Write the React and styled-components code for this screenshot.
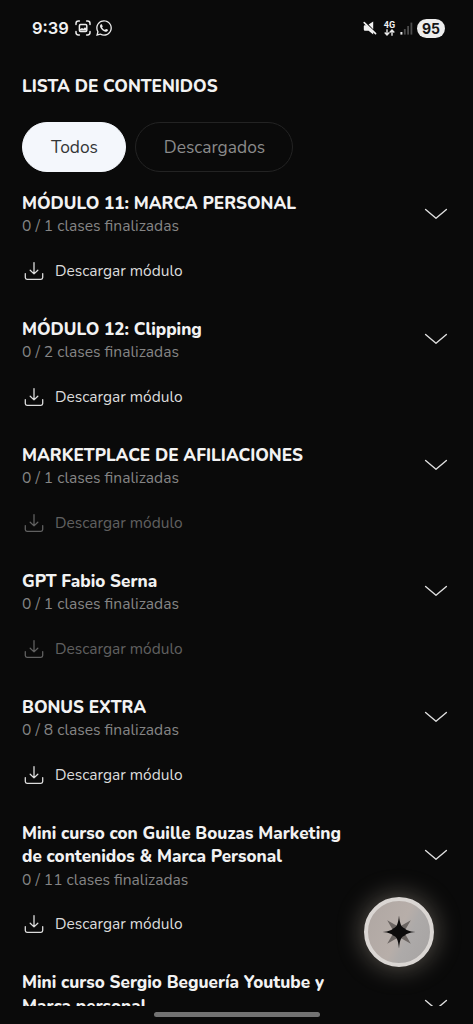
import { FaWhatsapp } from 'react-icons/fa'
import styled, { createGlobalStyle } from 'styled-components'

const modules = [
  { title: ['MÓDULO 11: MARCA PERSONAL'], classes: 1 },
  { title: ['MÓDULO 12: Clipping'], classes: 2 },
  { title: ['MARKETPLACE DE AFILIACIONES'], classes: 1, disabled: true },
  { title: ['GPT Fabio Serna'], classes: 1, disabled: true },
  { title: ['BONUS EXTRA'], classes: 8 },
  { title: ['Mini curso con Guille Bouzas Marketing', 'de contenidos & Marca Personal'], classes: 11 },
  { title: ['Mini curso Sergio Beguería Youtube y', 'Marca personal'] }
]

const CaptureIcon = () => (
  <svg width='16' height='16' viewBox='0 0 16 16' fill='none' stroke='#ececec' strokeWidth='1.5' strokeLinecap='round'>
    <path d='M1 4.6V3.4Q1 1 3.4 1h1M11.6 1h1Q15 1 15 3.4v1.2M15 11.4v1.2q0 2.4-2.4 2.4h-1M4.4 15h-1Q1 15 1 12.6v-1.2' />
    <rect x='4.4' y='4.6' width='7.4' height='6.8' rx='1.2' />
    <path d='M5 10.6V9l2-1 1.4.8 1.6-1.6 1.4 1.2v2.2z' fill='#ececec' stroke='none' />
  </svg>
)

const MutedIcon = () => (
  <svg width='14' height='14' viewBox='0 0 14 14' fill='#f2f2f2'>
    <path d='M1.4 4.2h2.2l6.6 6.6v2.6L5.6 9.8H2q-1.2 0-1.2-1.2V5zM5.6 3.6L10.2.6v7.6z' />
    <path d='M1.2 1.6l11.4 11' stroke='#f2f2f2' strokeWidth='1.6' strokeLinecap='round' />
  </svg>
)

const ArrowsIcon = () => (
  <svg width='11' height='7' viewBox='0 0 11 7' fill='none' stroke='#e8e8e8' strokeWidth='1.4'>
    <path d='M3 .2v5.6M.7 3.6L3 6l2.3-2.4M8 6.8V1.2M5.7 3.4L8 1l2.3 2.4' />
  </svg>
)

const SignalIcon = () => (
  <svg width='13' height='13' viewBox='0 0 13 13'>
    <rect x='0.4' y='10' width='2' height='2.6' fill='#e8e8e8' />
    <rect x='3.9' y='7' width='1.8' height='5.6' fill='#4c4c4c' />
    <rect x='7.2' y='4' width='1.8' height='8.6' fill='#4c4c4c' />
    <rect x='10.5' y='0.6' width='1.8' height='12' fill='#4c4c4c' />
  </svg>
)

const DownloadIcon = () => (
  <svg width='20' height='20' viewBox='0 0 20 20' fill='none' stroke='currentColor' strokeWidth='1.3' strokeLinecap='round' strokeLinejoin='round'>
    <path d='M10 1.6v11.2M6.2 9.2l3.8 3.7 3.8-3.7M1.3 12.6v4q0 1.7 1.7 1.7h14q1.7 0 1.7-1.7v-4' />
  </svg>
)

const ChevronIcon = () => (
  <svg width='24' height='12' viewBox='0 0 24 12' fill='none' stroke='#dedede' strokeWidth='1.4' strokeLinecap='round' strokeLinejoin='round'>
    <path d='M1.6 1.5L12 10.3l10.4-8.8' />
  </svg>
)

const StarIcon = () => (
  <svg width='34' height='34' viewBox='-17 -17 34 34'>
    <path d='M-11.8-11.8L0-5 11.8-11.8 5 0 11.8 11.8 0 5-11.8 11.8-5 0z' fill='#6b6562' />
    <path d='M0-16.4C.9-7 2.6-4.8 5.4-3.8 7-2.2 10-.6 16.4 0 10 .6 7 2.2 5.4 3.8 2.6 4.8.9 7 0 16.4-.9 7-2.6 4.8-5.4 3.8-7 2.2-10 .6-16.4 0-10-.6-7-2.2-5.4-3.8-2.6-4.8-.9-7 0-16.4z' fill='#0c0b0b' />
  </svg>
)

export default function App () {
  return (
    <Screen>
      <GlobalStyle />
      <StatusBar>
        <StatusGroup>
          <Time>9:39</Time>
          <CaptureIcon />
          <FaWhatsapp size={18} color='#ececec' />
        </StatusGroup>
        <StatusRight>
          <MutedIcon />
          <Network>
            <span>4G</span>
            <ArrowsIcon />
          </Network>
          <SignalIcon />
          <Battery>95</Battery>
        </StatusRight>
      </StatusBar>
      <Content>
        <Heading>LISTA DE CONTENIDOS</Heading>
        <Tabs>
          <Tab $active $width={104}>Todos</Tab>
          <Tab $width={158}>Descargados</Tab>
        </Tabs>
        {modules.map(({ title, classes, disabled }) => (
          <Module key={title[0]}>
            <ModuleHeader>
              <div>
                {title.map(line => <ModuleTitle key={line}>{line}</ModuleTitle>)}
                <Progress>{classes && `0 / ${classes} clases finalizadas`}</Progress>
              </div>
              <ChevronIcon />
            </ModuleHeader>
            {classes &&
              <Download disabled={disabled}>
                <DownloadIcon />
                Descargar módulo
              </Download>}
          </Module>
        ))}
      </Content>
      <HomeArea>
        <HomeBar />
      </HomeArea>
      <FloatingButton aria-label='Asistente'>
        <StarIcon />
      </FloatingButton>
    </Screen>
  )
}

const GlobalStyle = createGlobalStyle`
* { box-sizing: border-box; }
body {
  margin: 0;
  background: #0a0a0a;
  overflow: hidden;
}
button { font: inherit; }
svg { flex-shrink: 0; }
`
const Screen = styled.div`
position: relative;
display: flex;
flex-direction: column;
height: 100vh;
overflow: hidden;
background: #0a0a0a;
color: #f2f2f2;
font-family: Nunito, Lato, sans-serif;
`
const StatusBar = styled.header`
display: flex;
justify-content: space-between;
align-items: center;
height: 56px;
padding: 0 28px 0 32px;
font-family: Inter, sans-serif;
`
const StatusGroup = styled.div`
display: flex;
align-items: center;
gap: 4px;
`
const Time = styled.span`
margin-right: 2px;
font-size: 16.5px;
font-weight: 600;
`
const StatusRight = styled(StatusGroup)`
gap: 5px;
`
const Network = styled.div`
display: flex;
flex-direction: column;
align-items: center;
width: 11px;
margin-left: 2px;
font-family: Roboto, sans-serif;
font-size: 9px;
font-weight: 700;
line-height: 8px;
`
const Battery = styled.span`
width: 28px;
height: 19px;
margin-left: -1px;
border-radius: 10px;
background: #ededed;
color: #151515;
font-size: 14px;
font-weight: 700;
line-height: 19px;
text-align: center;
`
const Content = styled.main`
flex: 1;
min-height: 0;
padding: 19px 22px 0;
overflow: hidden;
`
const Heading = styled.h1`
margin: 0;
font-size: 17.1px;
font-weight: 800;
line-height: 24px;
`
const Tabs = styled.div`
display: flex;
gap: 9px;
padding: 23px 0 20px;
`
const Tab = styled.button`
width: ${({ $width }) => $width}px;
height: 50px;
padding: 0 0 0 1px;
border: 1px solid ${({ $active }) => $active ? '#f4f7fc' : '#232323'};
border-radius: 25px;
background: ${({ $active }) => $active ? '#f4f7fc' : 'transparent'};
color: ${({ $active }) => $active ? '#333537' : '#8b8b8b'};
font-size: 17.4px;
`
const Module = styled.section`
padding-bottom: 35.4px;
`
const ModuleHeader = styled.div`
display: flex;
justify-content: space-between;
align-items: center;
padding-right: 3px;

> svg {
  margin-bottom: 3px;
}
`
const ModuleTitle = styled.div`
font-size: 17.1px;
font-weight: 800;
line-height: 23.4px;
white-space: nowrap;
`
const Progress = styled.div`
min-height: 22.6px;
color: #858585;
font-size: 15.6px;
line-height: 22.6px;
`
const Download = styled.button`
display: flex;
align-items: center;
gap: 11px;
height: 24px;
margin-top: 20.6px;
padding: 0 2px;
border: 0;
background: none;
color: ${({ disabled }) => disabled ? '#606060' : '#dcdcdc'};
font-size: 15.5px;
`
const HomeArea = styled.footer`
display: flex;
justify-content: center;
height: 18px;
padding-top: 6px;
`
const HomeBar = styled.div`
width: 166px;
height: 5px;
border-radius: 3px;
background: #727272;
`
const FloatingButton = styled.button`
position: absolute;
right: 39px;
bottom: 57px;
display: flex;
align-items: center;
justify-content: center;
width: 70px;
height: 70px;
padding: 0;
border: 4px solid #dad6d3;
border-radius: 50%;
background: linear-gradient(115deg, #aea6a2, #b7aea9 50%, #adaaa9 62%, #a5a2a1);
background-origin: border-box;
box-shadow: 0 0 24px 3px rgba(180, 170, 155, 0.4);
`
